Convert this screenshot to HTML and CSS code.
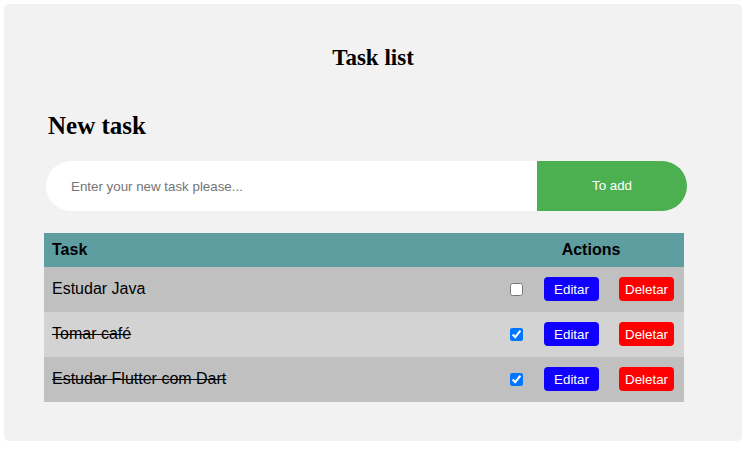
FILE: index.html
```html
<!DOCTYPE html>
<html lang="en">
<head>
<meta charset="utf-8">
<title>Task list</title>
<link rel="stylesheet" href="styles.css">
</head>
<body>
<div class="app">
  <h1 class="title">Task list</h1>
  <h2 class="subtitle">New task</h2>
  <form class="add-form">
    <input class="add-input" type="text" placeholder="Enter your new task please...">
    <button class="add-btn" type="button">To add</button>
  </form>
  <table class="tasks">
    <thead>
      <tr>
        <th class="col-task">Task</th>
        <th class="col-actions">Actions</th>
      </tr>
    </thead>
    <tbody>
      <tr class="row-odd">
        <td class="task-name">Estudar Java</td>
        <td><div class="actions"><input class="check" type="checkbox"><button class="btn btn-edit" type="button">Editar</button><button class="btn btn-delete" type="button">Deletar</button></div></td>
      </tr>
      <tr class="row-even">
        <td class="task-name done">Tomar café</td>
        <td><div class="actions"><input class="check" type="checkbox" checked><button class="btn btn-edit" type="button">Editar</button><button class="btn btn-delete" type="button">Deletar</button></div></td>
      </tr>
      <tr class="row-odd">
        <td class="task-name done">Estudar Flutter com Dart</td>
        <td><div class="actions"><input class="check" type="checkbox" checked><button class="btn btn-edit" type="button">Editar</button><button class="btn btn-delete" type="button">Deletar</button></div></td>
      </tr>
    </tbody>
  </table>
</div>
</body>
</html>
```
FILE: styles.css
```css
html, body {
  margin: 0;
  background: #ffffff;
}
body {
  padding: 4px;
  font-family: "Liberation Sans", Arial, sans-serif;
}
.app {
  box-sizing: border-box;
  width: 738px;
  height: 437px;
  background: #f2f2f2;
  border-radius: 5px;
  padding: 40px 0 0 40px;
}
.title {
  margin: 0 0 0 -40px;
  font-family: "Liberation Serif", "Times New Roman", serif;
  font-weight: bold;
  font-size: 23px;
  line-height: 28px;
  text-align: center;
  color: #000;
}
.subtitle {
  margin: 39px 0 0 4px;
  font-family: "Liberation Serif", "Times New Roman", serif;
  font-weight: bold;
  font-size: 25px;
  line-height: 30px;
  color: #000;
}
.add-form {
  display: flex;
  margin: 20px 0 0 2px;
  width: 641px;
  height: 50px;
}
.add-input {
  box-sizing: border-box;
  width: 491px;
  height: 50px;
  border: none;
  outline: none;
  padding: 0 0 0 25px;
  background: #fff;
  border-radius: 25px 0 0 25px;
  font-family: "Liberation Sans", Arial, sans-serif;
  font-size: 13.333px;
}
.add-input::placeholder {
  color: #757575;
}
.add-btn {
  width: 150px;
  height: 50px;
  border: none;
  background: #4caf50;
  color: #fff;
  border-radius: 0 25px 25px 0;
  font-family: "Liberation Sans", Arial, sans-serif;
  font-size: 13.333px;
  padding: 0 0 1px;
}
.tasks {
  margin-top: 22px;
  width: 640px;
  border-collapse: collapse;
  border-spacing: 0;
  font-size: 16px;
  color: #000;
}
.tasks thead tr {
  height: 34px;
}
.tasks th {
  background: #5f9ea0;
  padding: 0 0 0 8px;
  font-weight: bold;
  font-size: 16px;
}
.col-task {
  text-align: left;
}
.col-actions {
  width: 186px;
  text-align: center;
  padding: 0 !important;
}
.tasks tbody tr {
  height: 45px;
}
.tasks td {
  padding: 0 0 1px;
}
.task-name {
  padding-left: 8px !important;
}
.done {
  text-decoration: line-through;
}
.row-odd {
  background: #c0c0c0;
}
.row-even {
  background: #d3d3d3;
}
.actions {
  display: flex;
  justify-content: flex-end;
  align-items: center;
  padding-right: 10px;
}
.check {
  width: 13px;
  height: 13px;
  margin: 0 21px 0 0;
}
.btn {
  width: 55px;
  height: 24px;
  border: none;
  border-radius: 4px;
  color: #fff;
  padding: 0;
  font-family: "Liberation Sans", Arial, sans-serif;
  font-size: 13.333px;
}
.btn-edit {
  background: #1000ff;
  margin-right: 20px;
}
.btn-delete {
  background: #ff0000;
}
```
